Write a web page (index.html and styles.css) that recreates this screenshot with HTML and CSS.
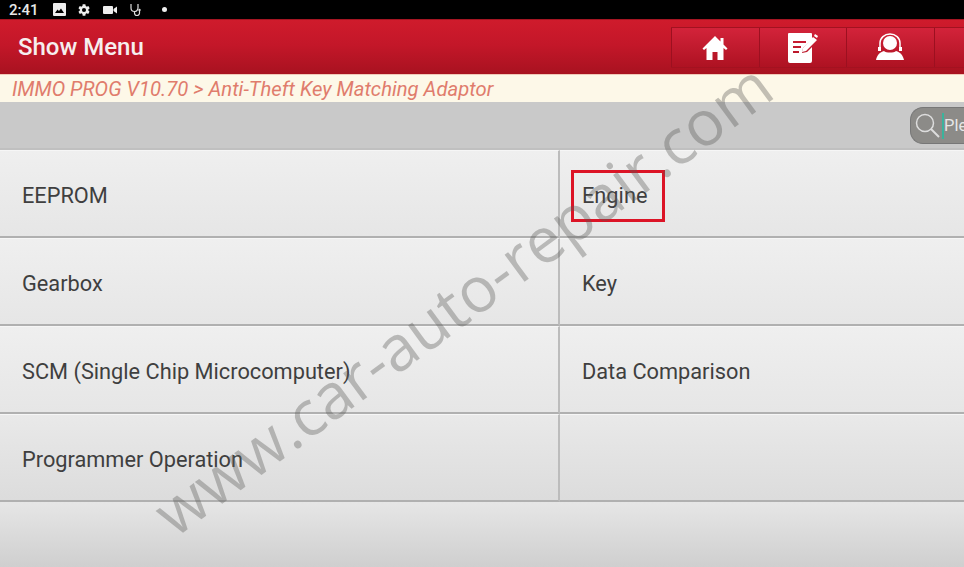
FILE: index.html
```html
<!DOCTYPE html>
<html lang="en">
<head>
<meta charset="utf-8">
<title>Show Menu</title>
<link rel="stylesheet" href="styles.css">
</head>
<body>
<div class="screen">
  <div class="status">
    <span class="time">2:41</span>
    <svg class="si" width="13" height="13" viewBox="0 0 13 13"><path fill="#eee" fill-rule="evenodd" d="M1 0h11a1 1 0 0 1 1 1v11a1 1 0 0 1-1 1H1a1 1 0 0 1-1-1V1a1 1 0 0 1 1-1zM2 10h9L8 5.500 6 8 4.500 6.500z"/></svg>
    <svg class="si" width="14" height="14" viewBox="0 0 24 24"><path fill="#eee" d="M19.400 13a7.500 7.500 0 0 0 0-2l2.400-1.800-2.300-4-2.800 1.100a7.500 7.500 0 0 0-1.700-1L14.300 2H9.700l-.4 3.300a7.500 7.500 0 0 0-1.700 1L4.800 5.200l-2.300 4L4.900 11a7.500 7.500 0 0 0 0 2l-2.400 1.800 2.300 4 2.800-1.100a7.500 7.500 0 0 0 1.700 1l.4 3.300h4.600l.4-3.300a7.500 7.500 0 0 0 1.700-1l2.800 1.100 2.300-4zM12 15.500a3.500 3.500 0 1 1 0-7 3.500 3.500 0 0 1 0 7z"/></svg>
    <svg class="si" width="14" height="10" viewBox="0 0 14 10"><path fill="#eee" d="M1 1h8a1 1 0 0 1 1 1v6a1 1 0 0 1-1 1H1a1 1 0 0 1-1-1V2a1 1 0 0 1 1-1zM10.500 4 14 1.500v7L10.500 6z"/></svg>
    <svg class="si" width="14" height="14" viewBox="0 0 14 14"><path fill="none" stroke="#ddd" stroke-width="1.200" d="M2 1v4a3.500 3.500 0 0 0 7 0V1M5.500 8.500V10a2.500 2.500 0 0 0 5 0V8"/><circle cx="10.500" cy="7" r="1.200" fill="#ddd"/></svg>
    <span class="dot"></span>
  </div>

  <header class="topbar">
    <h1 class="title">Show Menu</h1>
    <nav class="actions">
      <div class="action">
        <svg width="26" height="26" viewBox="0 0 26 26"><path fill="#fff" d="M13 1 0.500 13.500l1.500 1.500 2.500-2V25h6v-8h5v8h6V13l2.500 2 1.500-1.500-4-4V3h-3v3.500z"/></svg>
      </div>
      <div class="action">
        <svg width="32" height="32" viewBox="0 0 32 32"><path fill="#fff" fill-rule="evenodd" d="M2 1h22a1 1 0 0 1 1 1v5l-9 9-1 5 5-1 5-5v14a2 2 0 0 1-2 2H3a2 2 0 0 1-2-2V2a1 1 0 0 1 1-1zM6 9v2h13V9zM6 14v2h8v-2zM6 19v2h6v-2z"/><path fill="#fff" d="M26 5l4 3-11 11-4 1 1-4zM28 2l3 2-1 2-3-2z"/></svg>
      </div>
      <div class="action">
        <svg width="30" height="30" viewBox="0 0 30 30"><circle cx="15" cy="10" r="7" fill="#fff"/><path fill="none" stroke="#fff" stroke-width="1.500" d="M5 14V10a10 9 0 0 1 20 0v4"/><path fill="#fff" d="M3 14h3v4H3zM24 14h3v4h-3zM9 18c2 2 10 2 12 0 4 1 7 4 8 9H1c1-5 4-8 8-9z"/></svg>
      </div>
      <div class="action"></div>
    </nav>
  </header>

  <div class="crumb">IMMO PROG V10.70 &gt; Anti-Theft Key Matching Adaptor</div>

  <div class="toolbar">
    <div class="search">
      <svg class="lens" width="28" height="30" viewBox="0 0 28 30"><circle cx="11" cy="12" r="8.500" fill="none" stroke="#ddd" stroke-width="1.500"/><path stroke="#ddd" stroke-width="2" d="M17 18l8 8"/></svg>
      <span class="caret"></span>
      <span class="hint">Ple</span>
    </div>
  </div>

  <main class="grid">
    <div class="cell">EEPROM</div>
    <div class="cell"><span class="marked">Engine</span></div>
    <div class="cell">Gearbox</div>
    <div class="cell">Key</div>
    <div class="cell">SCM (Single Chip Microcomputer)</div>
    <div class="cell">Data Comparison</div>
    <div class="cell">Programmer Operation</div>
    <div class="cell"></div>
  </main>
  <div class="footer"></div>

  <div class="watermark">www.car-auto-repair.com</div>
</div>
</body>
</html>
```
FILE: styles.css
```css
* { box-sizing: border-box; }
html, body { margin: 0; padding: 0; }
body { font-family: Roboto, "Liberation Sans", sans-serif; }
.screen {
  position: relative;
  width: 964px;
  height: 567px;
  overflow: hidden;
  display: flex;
  flex-direction: column;
  background: #e4e4e4;
}
.status {
  height: 19px;
  background: #000;
  display: flex;
  align-items: center;
  padding-left: 9px;
  color: #e8e8e8;
  flex: none;
}
.time { font-size: 15px; font-weight: 500; width: 44px; line-height: 14px; }
.si { margin-right: 12px; flex: none; }
.si:nth-of-type(2) { margin-left: -1px; }
.dot { width: 5px; height: 5px; border-radius: 50%; background: #eee; margin-left: 7px; }
.topbar {
  flex: none;
  height: 56px;
  display: flex;
  justify-content: space-between;
  background: linear-gradient(#cf1b2c 0, #c41729 45%, #a81220 100%);
  border-top: 1px solid #a51522;
  border-bottom: 1px solid #f0c9b8;
}
.title {
  margin: 0;
  padding: 0 0 0 18px;
  font-size: 24px;
  font-weight: 500;
  line-height: 55px;
  color: #f6eeee;
}
.actions {
  display: flex;
  width: 293px;
  height: 41px;
  margin-top: 7px;
  border-top: 1px solid #a31220;
  border-bottom: 1px solid #a31220;
}
.action {
  width: 87.500px;
  flex: none;
  display: flex;
  align-items: center;
  justify-content: center;
  border-left: 1px solid #9c1020;
  background: linear-gradient(#d3233a, #ae1222);
}
.crumb {
  flex: none;
  height: 27px;
  background: #fdf8e8;
  padding-left: 12px;
  font-size: 20.250px;
  font-style: italic;
  line-height: 29px;
  color: #e07c6c;
  white-space: nowrap;
}
.toolbar {
  flex: none;
  height: 48px;
  background: #c9c9c9;
  border-bottom: 2px solid #c0c0c0;
  display: flex;
  justify-content: flex-end;
  padding-top: 5px;
}
.search {
  width: 54px;
  height: 37px;
  border-radius: 13px 0 0 13px;
  background: #8c8b88;
  border: 1px solid #777;
  border-right: 0;
  display: flex;
  align-items: center;
  padding-left: 3px;
  overflow: hidden;
}
.lens { flex: none; }
.caret { width: 2px; height: 26px; background: #3bb39c; flex: none; }
.hint { font-size: 16.500px; color: #e6e6e6; white-space: nowrap; }
.grid {
  flex: none;
  display: grid;
  grid-template-columns: 560px 404px;
  grid-auto-rows: 88px;
}
.cell {
  display: flex;
  align-items: center;
  padding: 3px 0 0 22px;
  font-size: 21.750px;
  color: #3f3f3f;
  background: linear-gradient(#efefef, #e6e6e6);
  border-top: 1px solid #f6f6f6;
  border-bottom: 2px solid #b0b0b0;
}
.cell:nth-child(odd) { border-right: 2px solid #bcbcbc; }
.cell:nth-child(n+7) { background: linear-gradient(#e9e9e9, #dcdcdc); }
.marked {
  position: relative;
}
.marked::after {
  content: "";
  position: absolute;
  left: -11px;
  right: -18px;
  top: -13px;
  bottom: -14px;
  border: 3px solid #dc1426;
}
.footer {
  flex: 1;
  background: linear-gradient(#e6e6e6, #cfcfcf);
}
.watermark {
  position: absolute;
  left: 62px;
  top: 258px;
  width: 800px;
  text-align: center;
  font-family: "Open Sans", sans-serif;
  font-size: 63px;
  line-height: 80px;
  white-space: nowrap;
  color: rgba(90, 90, 85, 0.36);
  transform: rotate(-36.300deg);
  pointer-events: none;
}
```
